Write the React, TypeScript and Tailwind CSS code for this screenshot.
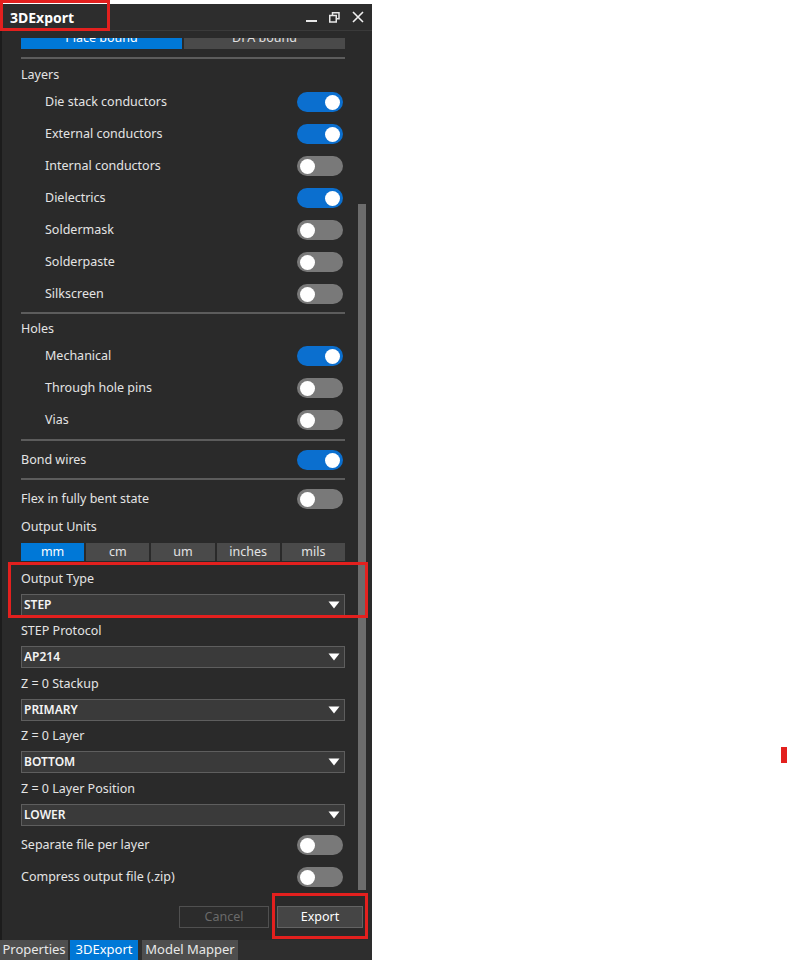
import React from 'react';

const FONT = { fontFamily: '"Noto Sans", "Open Sans", Arial, sans-serif' };

const Toggle: React.FC<{ on?: boolean }> = ({ on }) => (
  <div
    className={`w-[46px] h-[20px] rounded-full flex items-center px-[3px] ${
      on ? 'bg-[#0b6fcf] justify-end' : 'bg-[#797979] justify-start'
    }`}
  >
    <div className="w-[15px] h-[15px] rounded-full bg-white" />
  </div>
);

const ToggleRow: React.FC<{ label: string; on?: boolean; indent?: boolean }> = ({ label, on, indent }) => (
  <div className="h-[32px] flex items-center justify-between pr-[2px]">
    <span className={`${indent ? 'pl-[24px]' : ''} text-[12.5px] text-[#e4e4e4]`}>{label}</span>
    <Toggle on={on} />
  </div>
);

const Label: React.FC<{ text: string; className?: string }> = ({ text, className = '' }) => (
  <div className={`h-[22px] flex items-center text-[12.5px] text-[#e4e4e4] ${className}`}>{text}</div>
);

const Separator: React.FC<{ className?: string }> = ({ className = '' }) => (
  <div className={`h-[2px] bg-[#5c5c5c] ${className}`} />
);

const Dropdown: React.FC<{ label: string; value: string; gap: string }> = ({ label, value, gap }) => (
  <div className={gap}>
    <Label text={label} />
    <div className="mt-[4px] h-[22px] flex items-center justify-between bg-[#3a3a3a] border border-[#5e5e5e] pl-[2px] pr-[4px]">
      <span className="text-[12px] font-semibold text-[#f4f4f4]">{value}</span>
      <svg width="12" height="8" viewBox="0 0 12 8">
        <path d="M0.5 0.5 L11.5 0.5 L6 7.5 Z" fill="#ffffff" />
      </svg>
    </div>
  </div>
);

const units = ['mm', 'cm', 'um', 'inches', 'mils'];

export default function App() {
  return (
    <div className="relative w-[788px] h-[960px] bg-white overflow-hidden" style={FONT}>
      <div className="mt-[4px] w-[372px] h-[956px] flex flex-col bg-[#2a2a2a] border-l-[2px] border-[#1c1c1c]">
        {/* title bar */}
        <div className="h-[27px] flex items-center justify-between bg-[#2d2d2d] border-b border-[#3a3a3a] pl-[8px] pr-[8px]">
          <span className="text-[14px] font-bold text-white">3DExport</span>
          <div className="flex items-center gap-[12px]">
            <svg width="11" height="11" viewBox="0 0 11 11">
              <rect x="0" y="8" width="11" height="2" fill="#e8e8e8" />
            </svg>
            <svg width="11" height="11" viewBox="0 0 11 11" fill="none" stroke="#e8e8e8" strokeWidth="1.5">
              <rect x="3.5" y="0.75" width="6.5" height="6" />
              <rect x="0.75" y="3.5" width="6.5" height="6.5" fill="#2d2d2d" />
            </svg>
            <svg width="12" height="12" viewBox="0 0 12 12" stroke="#f0f0f0" strokeWidth="1.6">
              <path d="M1 1 L11 11 M11 1 L1 11" />
            </svg>
          </div>
        </div>

        {/* scroll area */}
        <div className="h-[862px] flex">
          <div className="flex-1 pt-[7px] pl-[19px] pr-[11px]">
            <div className="h-full overflow-hidden">
              <div className="-mt-[11px] h-[22px] flex gap-[2px]">
                <div className="flex-1 flex items-center justify-center bg-[#0078d7] text-[12.5px] text-white">Place bound</div>
                <div className="flex-1 flex items-center justify-center bg-[#4a4a4a] text-[12.5px] text-[#e0e0e0]">DFA bound</div>
              </div>
              <Separator className="mt-[8px]" />
              <Label text="Layers" className="mt-[5px] h-[21px]" />
              <ToggleRow indent label="Die stack conductors" on />
              <ToggleRow indent label="External conductors" on />
              <ToggleRow indent label="Internal conductors" />
              <ToggleRow indent label="Dielectrics" on />
              <ToggleRow indent label="Soldermask" />
              <ToggleRow indent label="Solderpaste" />
              <ToggleRow indent label="Silkscreen" />
              <Separator className="mt-[2px]" />
              <Label text="Holes" className="mt-[4px]" />
              <ToggleRow indent label="Mechanical" on />
              <ToggleRow indent label="Through hole pins" />
              <ToggleRow indent label="Vias" />
              <Separator className="mt-[3px]" />
              <div className="mt-[3px]">
                <ToggleRow label="Bond wires" on />
              </div>
              <Separator className="mt-[2px]" />
              <div className="mt-[3px]">
                <ToggleRow label="Flex in fully bent state" />
              </div>
              <Label text="Output Units" className="mt-[1px]" />
              <div className="mt-[5px] h-[18px] flex gap-[2px]">
                {units.map((u, i) => (
                  <div
                    key={u}
                    className={`flex-1 flex items-center justify-center text-[12.5px] ${
                      i === 0 ? 'bg-[#0078d7] text-white' : 'bg-[#4a4a4a] text-[#e4e4e4]'
                    }`}
                  >
                    {u}
                  </div>
                ))}
              </div>
              <Dropdown label="Output Type" value="STEP" gap="mt-[7px]" />
              <Dropdown label="STEP Protocol" value="AP214" gap="mt-[4px]" />
              <Dropdown label="Z = 0 Stackup" value="PRIMARY" gap="mt-[5px]" />
              <Dropdown label="Z = 0 Layer" value="BOTTOM" gap="mt-[4px]" />
              <Dropdown label="Z = 0 Layer Position" value="LOWER" gap="mt-[5px]" />
              <div className="mt-[3px]">
                <ToggleRow label="Separate file per layer" />
                <ToggleRow label="Compress output file (.zip)" />
              </div>
            </div>
          </div>
          {/* scrollbar */}
          <div className="w-[16px] pl-[2px]">
            <div className="mt-[173px] w-[8px] h-[686px] bg-[#6c6c6c]" />
          </div>
        </div>

        {/* buttons */}
        <div className="h-[47px] flex items-start justify-end gap-[8px] pt-[13px] pr-[9px]">
          <div className="w-[90px] h-[22px] flex items-center justify-center border border-[#505050] bg-[#2c2c2c] text-[12.5px] text-[#6a6a6a]">
            Cancel
          </div>
          <div className="w-[86px] h-[22px] flex items-center justify-center border border-[#636363] bg-[#454545] text-[12.5px] text-white">
            Export
          </div>
        </div>

        {/* bottom tabs */}
        <div className="h-[20px] flex gap-[2px] bg-[#2e2e2e] -ml-[2px]">
          <div className="w-[68px] flex items-center justify-center bg-[#4e4e4e] text-[13px] text-[#e8e8e8]">Properties</div>
          <div className="w-[68px] flex items-center justify-center bg-[#0078d7] text-[13px] text-white">3DExport</div>
          <div className="w-[96px] flex items-center justify-center bg-[#4e4e4e] text-[13px] text-[#e8e8e8] ml-[2px]">
            Model Mapper
          </div>
        </div>
      </div>

      {/* annotation marks */}
      <div className="absolute left-0 top-0 w-[110px] h-[31px] border-[3px] border-[#e3201e]" />
      <div className="absolute left-[8px] top-[562px] w-[360px] h-[56px] border-[3px] border-[#e3201e]" />
      <div className="absolute left-[272px] top-[893px] w-[96px] h-[46px] border-[3px] border-[#e3201e]" />
      <div className="absolute left-[781px] top-[747px] w-[6px] h-[16px] bg-[#e3201e]" />
    </div>
  );
}
